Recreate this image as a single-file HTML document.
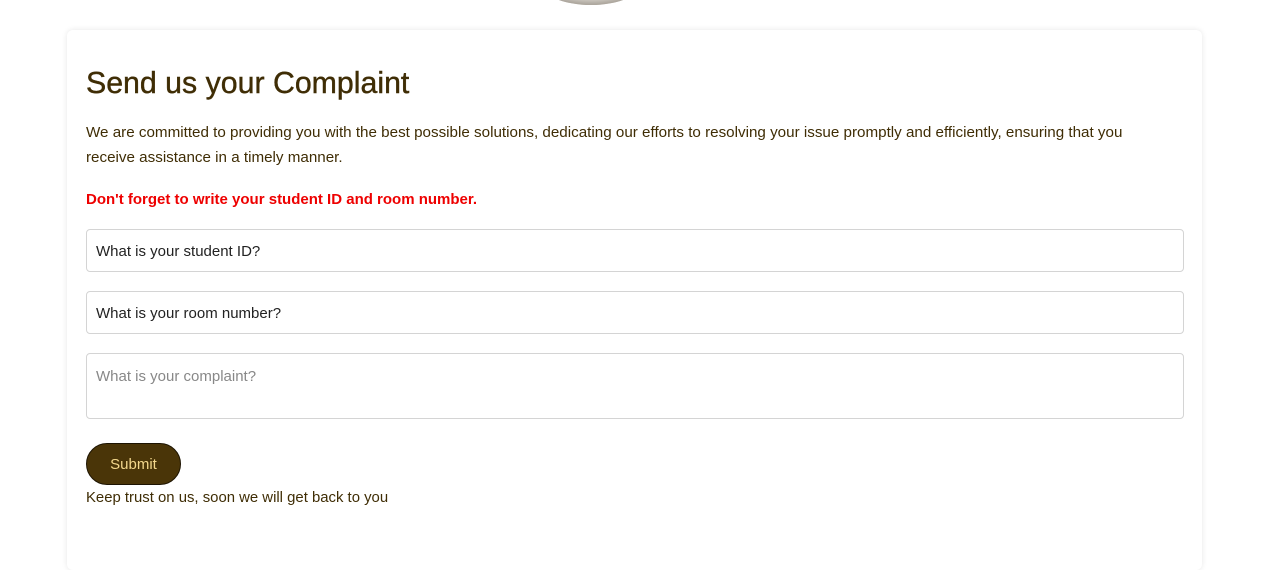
<!DOCTYPE html>
<html><head><style>
body{margin:0;width:1280px;height:531px;background:#fff;font-family:"Liberation Sans",sans-serif;overflow:hidden;position:relative;color:#3f2d05}
.img{position:absolute;left:540px;top:-40px;width:102px;height:45px;border-radius:50%;background:#cfcac2;box-shadow:inset 0 -3px 4px #a9a39a}
.card{position:absolute;left:67px;top:30px;width:1135px;height:540px;border-radius:6px;box-shadow:0 0 6px rgba(0,0,0,.1);background:#fff}
.a{position:absolute;left:86px;white-space:nowrap}
h1{margin:0;font-size:30.3px;font-weight:normal;top:67px;color:#3f2d05;-webkit-text-stroke:.4px #3f2d05}
.p{font-size:15.2px;line-height:25px;top:120px}
.r{color:#ee0000;font-weight:bold;font-size:15px;top:191px}
.in{position:absolute;left:86px;width:1098px;border:1px solid #d4d4d4;border-radius:4px;font-size:15px;box-sizing:border-box;padding:0 9px;color:#222}
.btn{position:absolute;left:86px;top:443px;width:95px;height:42px;border-radius:21px;background:#4a3508;border:1px solid #1d1402;box-sizing:border-box;color:#f3d78c;font-size:15px;text-align:center;line-height:42px}
.f{top:490px;font-size:14.9px}
</style></head><body>
<div class="img"></div>
<div class="card"></div>
<h1 class="a">Send us your Complaint</h1>
<div class="a p">We are committed to providing you with the best possible solutions, dedicating our efforts to resolving your issue promptly and efficiently, ensuring that you<br>receive assistance in a timely manner.</div>
<div class="a r">Don't forget to write your student ID and room number.</div>
<div class="in" style="top:229px;height:43px;line-height:43px">What is your student ID?</div>
<div class="in" style="top:291px;height:43px;line-height:43px">What is your room number?</div>
<div class="in" style="top:353px;height:66px;padding-top:14px;color:#888">What is your complaint?</div>
<div class="btn">Submit</div>
<div class="a f">Keep trust on us, soon we will get back to you</div>
</body></html>
